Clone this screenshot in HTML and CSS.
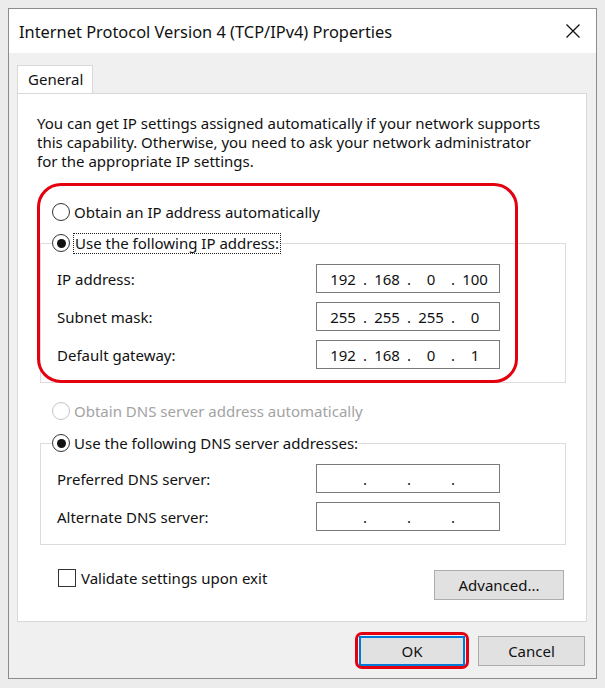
FILE: index.html
```html
<!DOCTYPE html>
<html lang="en">
<head>
<meta charset="UTF-8">
<title>Internet Protocol Version 4 (TCP/IPv4) Properties</title>
<link rel="stylesheet" href="styles.css">
</head>
<body>
<div class="window">
    <div class="titlebar">
        <span class="title">Internet Protocol Version 4 (TCP/IPv4) Properties</span>
        <svg class="close" width="14" height="14" viewBox="0 0 14 14">
            <path d="M0.5 0.5 L13.5 13.5 M13.5 0.5 L0.5 13.5" stroke="#111" stroke-width="1.3" fill="none"/>
        </svg>
    </div>

    <div class="dialog">
        <div class="tabs">
            <div class="tab">General</div>
        </div>

        <div class="panel">
            <p class="intro">You can get IP settings assigned automatically if your network supports this capability. Otherwise, you need to ask your network administrator for the appropriate IP settings.</p>

            <div class="option">
                <span class="radio"></span>
                <span>Obtain an IP address automatically</span>
            </div>
            <fieldset class="group">
                <legend class="option">
                    <span class="radio checked"></span>
                    <span class="focus">Use the following IP address:</span>
                </legend>
                <div class="field">
                    <span>IP address:</span>
                    <div class="ipbox"><span>192</span><i>.</i><span>168</span><i>.</i><span>0</span><i>.</i><span>100</span></div>
                </div>
                <div class="field">
                    <span>Subnet mask:</span>
                    <div class="ipbox"><span>255</span><i>.</i><span>255</span><i>.</i><span>255</span><i>.</i><span>0</span></div>
                </div>
                <div class="field">
                    <span>Default gateway:</span>
                    <div class="ipbox"><span>192</span><i>.</i><span>168</span><i>.</i><span>0</span><i>.</i><span>1</span></div>
                </div>
            </fieldset>

            <div class="option option-dns disabled">
                <span class="radio"></span>
                <span>Obtain DNS server address automatically</span>
            </div>
            <fieldset class="group group-dns">
                <legend class="option">
                    <span class="radio checked"></span>
                    <span>Use the following DNS server addresses:</span>
                </legend>
                <div class="field">
                    <span>Preferred DNS server:</span>
                    <div class="ipbox"><span></span><i>.</i><span></span><i>.</i><span></span><i>.</i><span></span></div>
                </div>
                <div class="field">
                    <span>Alternate DNS server:</span>
                    <div class="ipbox"><span></span><i>.</i><span></span><i>.</i><span></span><i>.</i><span></span></div>
                </div>
            </fieldset>

            <div class="footer">
                <label class="check"><span class="box"></span>Validate settings upon exit</label>
                <button class="btn btn-advanced">Advanced...</button>
            </div>

            <!-- red annotation drawn over the static IP block -->
            <div class="mark mark-ip"></div>
        </div>

        <div class="actions">
            <button class="btn btn-ok">OK</button>
            <button class="btn">Cancel</button>
        </div>
    </div>
</div>
</body>
</html>
```

FILE: styles.css
```css
body {
    margin: 8px;
    background-color: #ececec;
    font-family: "Noto Sans", "Open Sans", sans-serif;
    font-size: 15px;
    color: #111;
}

.window {
    border: 1px solid #8c8c8c;
    box-shadow: 0 0 0 1px #d4d4d4;
    background-color: #f0f0f0;
    height: 671px;
    box-sizing: border-box;
}

.titlebar {
    height: 44px;
    background-color: #ffffff;
    display: flex;
    align-items: center;
    justify-content: space-between;
    padding: 0 16px 0 10px;
}
.title {
    font-size: 16.4px;
}
.close {
    display: block;
}

.dialog {
    padding: 12px 9px 12px 8px;
}

.tabs {
    display: flex;
}
.tab {
    width: 76px;
    height: 29px;
    box-sizing: border-box;
    border: 1px solid #d9d9d9;
    border-bottom: none;
    background-color: #ffffff;
    padding: 3px 0 0 10px;
    margin-bottom: -1px;
    position: relative;
}

.panel {
    position: relative;
    background-color: #ffffff;
    border: 1px solid #d9d9d9;
    padding: 20px 20px 21px 22px;
}

.intro {
    margin: 0 0 30px -3px;
    max-width: 510px;
    line-height: 19px;
}

.option {
    display: flex;
    align-items: center;
    gap: 4px;
    height: 22px;
    padding-left: 12px;
}
.radio {
    width: 18px;
    height: 18px;
    box-sizing: border-box;
    border: 1px solid #333;
    border-radius: 50%;
    background-color: #fff;
    display: flex;
    align-items: center;
    justify-content: center;
}
.radio.checked::after {
    content: "";
    width: 9px;
    height: 9px;
    border-radius: 50%;
    background-color: #111;
}
.focus {
    outline: 1px dotted #222;
    outline-offset: 0;
    padding: 0 1px;
    line-height: 19px;
}

.disabled {
    color: #a3a3a3;
}
.disabled .radio {
    border-color: #c4c4c4;
}

.group {
    margin: 9px 0 0 0;
    padding: 10px 65px 13px 11px;
    border: 1px solid #dcdcdc;
    min-width: 0;
}
.group legend.option {
    padding: 0;
}

.field {
    display: flex;
    align-items: center;
    justify-content: space-between;
    padding-left: 5px;
    height: 29px;
}
.field + .field {
    margin-top: 9px;
}

.ipbox {
    width: 184px;
    height: 29px;
    box-sizing: border-box;
    border: 1px solid #7a7a7a;
    background-color: #fff;
    display: grid;
    grid-template-columns: 36px 8px 36px 8px 36px 8px 36px;
    align-items: center;
    padding-left: 8px;
}
.ipbox span {
    text-align: center;
}
.ipbox i {
    font-style: normal;
    text-align: center;
}

.option-dns {
    margin-top: 17px;
}
.group-dns {
    margin-top: 10px;
}

.footer {
    display: flex;
    justify-content: space-between;
    align-items: flex-start;
    margin-top: 23px;
    padding-right: 2px;
}
.check {
    display: flex;
    align-items: center;
    gap: 5px;
    height: 20px;
    padding-left: 18px;
}
.box {
    width: 18px;
    height: 18px;
    box-sizing: border-box;
    border: 1px solid #333;
    background-color: #fff;
}

.btn {
    font-family: inherit;
    font-size: 15px;
    color: #111;
    width: 107px;
    height: 30px;
    background-color: #e1e1e1;
    border: 1px solid #adadad;
    padding: 0;
}
.btn-advanced {
    width: 130px;
    margin-top: 2px;
}

.actions {
    display: flex;
    justify-content: flex-end;
    gap: 13px;
    margin-top: 14px;
    padding-right: 2px;
}
.btn-ok {
    position: relative;
    width: 106px;
    border: 2px solid #0078d7;
}
.btn-ok::after {
    content: "";
    position: absolute;
    inset: -6px -6px -5px -6px;
    border: 3px solid #e3000f;
    border-radius: 7px;
}

.mark {
    position: absolute;
    box-sizing: border-box;
    border: 3px solid #e3000f;
}
.mark-ip {
    left: 19px;
    top: 89px;
    width: 481px;
    height: 200px;
    border-radius: 24px;
}
```
